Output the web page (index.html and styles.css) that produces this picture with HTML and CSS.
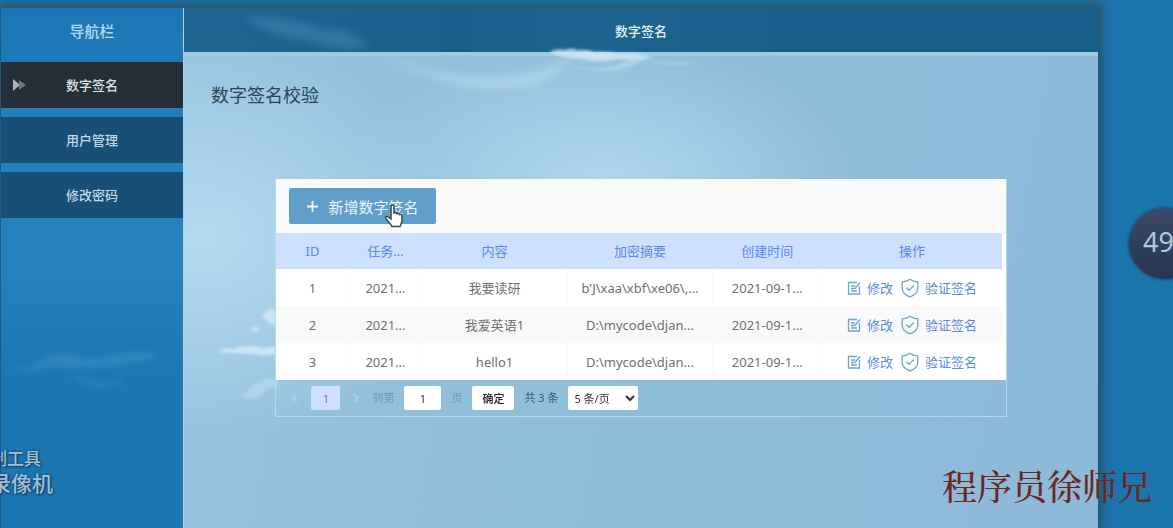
FILE: index.html
```html
<!DOCTYPE html>
<html lang="zh-CN">
<head>
    <meta charset="UTF-8">
    <meta name="viewport" content="width=device-width, initial-scale=1.0">
    <title>数字签名</title>
    <link rel="stylesheet" href="styles.css">
</head>
<body>
    <svg class="sprite" width="0" height="0" aria-hidden="true">
        <symbol id="icon-edit" viewBox="0 0 14 14">
            <path d="M12.5 5v8h-11V1.500h8.500M4 5h4M4 7.500h3M4 10h6M7.500 8l5.500-6.500"/>
        </symbol>
        <symbol id="icon-shield" viewBox="0 0 18 20">
            <path d="M9 1.200C6.800 2.800 4.200 3.600 1.200 3.800v6.400c0 4 3 6.800 7.800 8.600 4.800-1.800 7.800-4.600 7.800-8.600V3.800C13.800 3.600 11.200 2.800 9 1.200zM5.500 9.800l2.700 2.600 4.500-4.900"/>
        </symbol>
    </svg>

    <div class="window">
        <aside class="sidebar">
            <h2 class="sidebar-title">导航栏</h2>
            <nav class="menu">
                <a class="menu-item active" href="#">
                    <svg class="menu-arrow" viewBox="0 0 14 12" aria-hidden="true"><path d="M0 0l7 6-7 6z"/><path class="faded" d="M6 1l7 5-7 5z"/></svg>
                    数字签名
                </a>
                <a class="menu-item" href="#">用户管理</a>
                <a class="menu-item" href="#">修改密码</a>
            </nav>
            <svg class="sidebar-cloud" viewBox="0 0 180 60" aria-hidden="true">
                <path d="M2 32q20-1 32-6 14-13 32-9 24 5 46 0 22-5 46-2-8 8-22 9-20 3-36 5-24 2-48-1-22 8-50 4z"/>
                <path d="M68 34q18 11 36 9 14-2 22-2-18 9-34 8-18-5-24-15z"/>
            </svg>
        </aside>

        <div class="content">
            <svg class="sky" viewBox="0 0 914 520" aria-hidden="true">
                <defs>
                    <filter id="soft"><feGaussianBlur stdDeviation="1.500"/></filter>
                    <filter id="softer"><feGaussianBlur stdDeviation="4"/></filter>
                </defs>
                <g filter="url(#softer)">
                    <path class="streak" d="M190 42q40 20 90 27 60 8 110-20-20 24-54 30-70 8-146-37z"/>
                </g>
                <g filter="url(#soft)">
                    <path class="cloud" d="M365 44q8-4 16-2 6-3 12 0 10-1 18 2 14-1 22 2 14-2 24 1 8 1 14 2-18 4-36 2-20 4-36 0-20-1-34-7z"/>
                    <path class="streak" d="M386 56q24 8 46 2 12-8 30-8-12 10-34 13-28 1-42-7zM462 52q24 2 52 3-24 5-52-3z"/>
                    <path class="cloud" d="M34 344q8-6 16-3 6-5 12-2 8-3 16 1l16-2v8q-14 3-24 0-18 0-36-2zM78 308q6-10 12-6l4 4v12q-8 0-16-10zM66 321q6-4 10 0-4 5-10 0z"/>
                    <path class="streak" d="M56 388q10-6 14-12 12-7 24-5v8q-12-1-16 8-12 7-22 1z"/>
                </g>
                <g filter="url(#softer)" class="beam-layer">
                    <path class="beam" d="M60 8q50 2 80 14 30-2 44 18-30 4-60-8-40-4-64-24z"/>
                </g>
            </svg>

            <header class="topbar">
                <h1 class="topbar-title">数字签名</h1>
            </header>

            <main class="page">
                <h2 class="page-title">数字签名校验</h2>

                <section class="panel">
                    <div class="toolbar">
                        <button type="button" class="btn-add">
                            <svg class="icon-plus" viewBox="0 0 12 12" aria-hidden="true"><path d="M6 0v12M0 6h12"/></svg>
                            新增数字签名
                        </button>
                        <svg class="pointer" viewBox="0 0 20 24" aria-hidden="true">
                            <path d="M7 2.500c0-2 3-2 3 0V9c1-1 2.600-.6 2.800.6 1-.8 2.400-.3 2.600.9 1.200-.6 2.600 0 2.600 1.500v4c0 3-1 4-2 6.500H8C6.500 19.500 3.500 17 1.800 14.500c-.8-1.600 1-2.600 2.400-1.500L7 15z"/>
                        </svg>
                    </div>

                    <table class="data-table">
                        <colgroup>
                            <col class="col-id">
                            <col class="col-task">
                            <col class="col-text">
                            <col class="col-hash">
                            <col class="col-time">
                            <col class="col-action">
                        </colgroup>
                        <thead>
                            <tr>
                                <th>ID</th>
                                <th>任务...</th>
                                <th>内容</th>
                                <th>加密摘要</th>
                                <th>创建时间</th>
                                <th>操作</th>
                            </tr>
                        </thead>
                        <tbody>
                            <tr>
                                <td>1</td>
                                <td>2021...</td>
                                <td>我要读研</td>
                                <td>b'J\xaa\xbf\xe06\,...</td>
                                <td>2021-09-1...</td>
                                <td>
                                    <div class="actions">
                                        <a href="#"><svg class="icon-edit" aria-hidden="true"><use href="#icon-edit"/></svg>修改</a>
                                        <a href="#"><svg class="icon-shield" aria-hidden="true"><use href="#icon-shield"/></svg>验证签名</a>
                                    </div>
                                </td>
                            </tr>
                            <tr>
                                <td>2</td>
                                <td>2021...</td>
                                <td>我爱英语1</td>
                                <td>D:\mycode\djan...</td>
                                <td>2021-09-1...</td>
                                <td>
                                    <div class="actions">
                                        <a href="#"><svg class="icon-edit" aria-hidden="true"><use href="#icon-edit"/></svg>修改</a>
                                        <a href="#"><svg class="icon-shield" aria-hidden="true"><use href="#icon-shield"/></svg>验证签名</a>
                                    </div>
                                </td>
                            </tr>
                            <tr>
                                <td>3</td>
                                <td>2021...</td>
                                <td>hello1</td>
                                <td>D:\mycode\djan...</td>
                                <td>2021-09-1...</td>
                                <td>
                                    <div class="actions">
                                        <a href="#"><svg class="icon-edit" aria-hidden="true"><use href="#icon-edit"/></svg>修改</a>
                                        <a href="#"><svg class="icon-shield" aria-hidden="true"><use href="#icon-shield"/></svg>验证签名</a>
                                    </div>
                                </td>
                            </tr>
                        </tbody>
                    </table>

                    <form class="pager">
                        <button type="button" class="pager-arrow" aria-label="上一页"><svg viewBox="0 0 6 10"><path d="M5 1L1 5l4 4"/></svg></button>
                        <button type="button" class="pager-current">1</button>
                        <button type="button" class="pager-arrow" aria-label="下一页"><svg viewBox="0 0 6 10"><path d="M1 1l4 4-4 4"/></svg></button>
                        <label class="pager-skip">到第 <input type="text" class="pager-input" value="1"> 页</label>
                        <button type="button" class="pager-ok">确定</button>
                        <span class="pager-total">共 3 条</span>
                        <select class="pager-size" aria-label="每页条数">
                            <option>5 条/页</option>
                            <option>10 条/页</option>
                        </select>
                    </form>
                </section>
            </main>
        </div>
    </div>

    <!-- desktop items around the window -->
    <div class="desktop-label"><span>制工具</span><span class="desktop-label-big">录像机</span></div>
    <div class="speed-ball">49</div>
    <div class="watermark">程序员徐师兄</div>
</body>
</html>
```

FILE: styles.css
```css
* {
    box-sizing: border-box;
}

body {
    margin: 0;
    min-height: 100vh;
    display: flex;
    position: relative;
    overflow: hidden;
    background-color: #1c76ae;
    font-family: "Noto Sans", "Noto Sans CJK SC", sans-serif;
    font-size: 13px;
    line-height: 20px;
    color: #707070;
}

button, input, select {
    font-family: inherit;
    font-size: 11px;
    border: none;
    border-radius: 2px;
    padding: 0;
}

a {
    text-decoration: none;
}

.sprite {
    position: absolute;
}

.window {
    flex: 1;
    display: flex;
    margin: 8px 75px 0 1px;
    box-shadow: 0 0 10px 4px rgba(42, 70, 82, 0.8);
}

/* sidebar */
.sidebar {
    width: 182px;
    flex-shrink: 0;
    background: linear-gradient(#1c76b4, #2681bc 30%, #2681bc 50%, #1c76b2 72%);
}

.sidebar-title {
    margin: 0;
    height: 54px;
    line-height: 46px;
    text-align: center;
    font-size: 15px;
    font-weight: 500;
    color: #b8daf0;
}

.menu {
    display: flex;
    flex-direction: column;
    gap: 9px;
}

.menu-item {
    display: flex;
    align-items: center;
    justify-content: center;
    position: relative;
    height: 46px;
    background-color: #174f76;
    font-weight: 500;
    color: #c3d8e6;
}

.menu-item.active {
    background-color: #242f38;
    color: #dde2e5;
}

.menu-arrow {
    position: absolute;
    left: 12px;
    width: 14px;
    height: 12px;
    fill: #aeb4b8;
}

.menu-arrow .faded {
    fill: #6d767c;
}

.sidebar-cloud {
    display: block;
    width: 100%;
    margin-top: 120px;
    fill: #4a9ac8;
    opacity: 0.4;
    filter: blur(3px);
}

/* content */
.content {
    flex: 1;
    position: relative;
    border-left: 1px solid #a9d4ec;
    background:
        radial-gradient(ellipse 260px 150px at 46% 180px, #b0d8ee, rgba(176, 216, 238, 0)),
        radial-gradient(ellipse 260px 200px at 2% 230px, #b4daee, rgba(180, 218, 238, 0)),
        linear-gradient(100deg, #98c4de, #8fbcd8 55%, #8dbad9);
}

.sky {
    position: absolute;
    top: 0;
    left: 0;
    width: 100%;
    pointer-events: none;
}

.sky .cloud {
    fill: #d6e9f8;
    opacity: 0.8;
}

.sky .streak {
    fill: #c4e2f4;
    opacity: 0.5;
}

.sky .beam {
    fill: #5c9cc4;
    opacity: 0.4;
}

.topbar {
    height: 48px;
    background: linear-gradient(90deg, #1f6690, #185f8b 30%, #1d648f 45%, #185e8b 70%);
    border-bottom: 4px solid #9fcbe4;
}

.topbar-title {
    margin: 0;
    line-height: 46px;
    text-align: center;
    font-size: 13px;
    font-weight: 500;
    color: #e0eef6;
}

.page {
    padding: 27px 0 40px;
}

.page-title {
    margin: 0 27px;
    font-size: 18px;
    line-height: 24px;
    font-weight: normal;
    color: #2c4657;
}

.panel {
    width: 80%;
    margin: 72px auto 0;
    position: relative;
    border: 1px solid #b4daee;
    border-top: none;
}

.toolbar {
    display: flex;
    align-items: center;
    position: relative;
    height: 54px;
    padding: 0 13px;
    background-color: #fafafa;
}

.btn-add {
    display: flex;
    align-items: center;
    justify-content: center;
    gap: 10px;
    width: 147px;
    height: 36px;
    background-color: #609fca;
    color: #e9f5fc;
    font-size: 15px;
    cursor: pointer;
}

.icon-plus {
    width: 11px;
    height: 11px;
    stroke: #e9f5fc;
    stroke-width: 2;
}

.pointer {
    position: absolute;
    left: 108px;
    top: 25px;
    width: 20px;
    height: 24px;
    fill: #fff;
    stroke: #3d474d;
    stroke-width: 1.5;
}

/* table */
.data-table {
    width: 100%;
    table-layout: fixed;
    border-collapse: collapse;
    border-right: 4px solid #fff;
    background-color: #fff;
    text-align: center;
}

.col-id { width: 10%; }
.col-task { width: 10%; }
.col-text { width: 20%; }
.col-hash { width: 20%; }
.col-time { width: 15%; }
.col-action { width: 25%; }

.data-table th,
.data-table td {
    height: 37px;
    padding: 0;
    white-space: nowrap;
    overflow: hidden;
    border-right: 1px solid #f9f9f9;
}

.data-table th {
    height: 36px;
    font-weight: normal;
    color: #5d86ea;
    background-color: #cde0ff;
    border-right-color: #cadefe;
}

.data-table tbody tr:nth-child(even) {
    background-color: #f9f9f9;
}

.actions {
    display: flex;
    justify-content: center;
    gap: 8px;
}

.actions a {
    display: flex;
    align-items: center;
    gap: 6px;
    color: #5a8cdc;
}

.icon-edit,
.icon-shield {
    width: 14px;
    height: 14px;
    fill: none;
    stroke: #6ca5cc;
    stroke-width: 1.3;
}

.icon-shield {
    width: 18px;
    height: 20px;
}

/* pager */
.pager {
    display: flex;
    align-items: center;
    height: 36px;
    padding-left: 13px;
    gap: 10px;
    font-size: 11px;
    color: #40586a;
}

.pager-arrow {
    display: flex;
    justify-content: center;
    width: 12px;
    background: none;
}

.pager-arrow svg {
    width: 6px;
    height: 10px;
    fill: none;
    stroke: #b4d3e5;
    stroke-width: 1.5;
}

.pager-current {
    width: 29px;
    height: 24px;
    background-color: #cde0ff;
    color: #5078c0;
}

.pager-skip {
    display: flex;
    align-items: center;
    gap: 10px;
    color: #7099b4;
}

.pager-input {
    width: 37px;
    height: 24px;
    text-align: center;
    background-color: #fff;
    color: #333;
}

.pager-ok {
    width: 42px;
    height: 24px;
    background-color: #fff;
    font-weight: 500;
    color: #222;
}

.pager-size {
    width: 70px;
    height: 24px;
    padding-left: 2px;
    background-color: #fff;
    color: #333;
}

/* desktop */
.desktop-label {
    position: absolute;
    left: -10px;
    bottom: 32px;
    display: flex;
    flex-direction: column;
    font-size: 17px;
    font-weight: 500;
    line-height: 25px;
    color: #9dc0d8;
    text-shadow: 0 0 3px #123f5e, 1px 1px 2px #123f5e;
}

.desktop-label-big {
    font-size: 21px;
}

.speed-ball {
    position: absolute;
    right: -27px;
    top: 208px;
    width: 71px;
    height: 71px;
    padding-left: 14px;
    border-radius: 50%;
    background: linear-gradient(#3a4a66, #25384f);
    box-shadow: 0 0 3px 1px #174c70;
    font-size: 27px;
    line-height: 67px;
    color: #a9cbe0;
}

.watermark {
    position: absolute;
    right: 21px;
    bottom: 19px;
    font-family: "Liberation Serif", "Noto Serif CJK SC", "Noto Sans CJK SC", serif;
    font-size: 35px;
    font-weight: 500;
    line-height: 40px;
    color: #6a281f;
}
```
